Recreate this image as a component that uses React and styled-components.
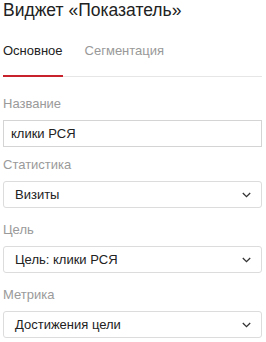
import React from 'react';
import styled, { createGlobalStyle } from 'styled-components';

const GlobalStyle = createGlobalStyle`
  html, body {
    margin: 0;
    padding: 0;
    background: #fff;
  }
  body {
    font-family: 'Liberation Sans', Arial, sans-serif;
    color: #222;
  }
`;

const fields = [
  { id: 'name', label: 'Название', value: 'клики РСЯ', kind: 'input', gap: 19 },
  { id: 'stat', label: 'Статистика', value: 'Визиты', kind: 'select', gap: 10 },
  { id: 'goal', label: 'Цель', value: 'Цель: клики РСЯ', kind: 'select', gap: 14 },
  { id: 'metric', label: 'Метрика', value: 'Достижения цели', kind: 'select', gap: 14 },
];

const Chevron = () => (
  <svg width="9" height="6" viewBox="0 0 9 6">
    <polyline points="0.8,1 4.5,4.6 8.2,1" fill="none" stroke="#333" strokeWidth="1.3" />
  </svg>
);

const Widget = () => {
  return (
    <Panel>
      <GlobalStyle />
      <Title>Виджет «Показатель»</Title>
      <Tabs>
        <Tab $active>Основное</Tab>
        <Tab>Сегментация</Tab>
      </Tabs>
      <Form>
        {fields.map(field => (
          <Field key={field.id} $gap={field.gap}>
            <Label>{field.label}</Label>
            {field.kind === 'input' ? (
              <Input>{field.value}</Input>
            ) : (
              <Select>
                <span>{field.value}</span>
                <Chevron />
              </Select>
            )}
          </Field>
        ))}
      </Form>
    </Panel>
  );
};

const Panel = styled.div`
  width: 266px;
  padding: 0 4px 0 3px;
  box-sizing: border-box;
`;

const Title = styled.div`
  font-size: 17.5px;
  line-height: 20px;
  color: #222;
`;

const Tabs = styled.div`
  display: flex;
  gap: 22px;
  margin-top: 23px;
  border-bottom: 1px solid #e6e6e6;
`;

const Tab = styled.div`
  font-size: 13px;
  line-height: 16px;
  padding-bottom: 16px;
  margin-bottom: -1px;
  color: ${p => (p.$active ? '#222' : '#999')};
  border-bottom: 2px solid ${p => (p.$active ? '#c8232c' : 'transparent')};
`;

const Form = styled.div`
  display: flex;
  flex-direction: column;
`;

const Field = styled.div`
  display: flex;
  flex-direction: column;
  margin-top: ${p => p.$gap}px;
`;

const Label = styled.div`
  font-size: 13px;
  line-height: 16px;
  color: #9a9a9a;
`;

const Input = styled.div`
  margin-top: 8px;
  height: 27px;
  box-sizing: border-box;
  border: 1px solid #d4d4d4;
  padding: 0 7px;
  display: flex;
  align-items: center;
  font-size: 13px;
  color: #222;
`;

const Select = styled.div`
  margin-top: 8px;
  height: 27px;
  box-sizing: border-box;
  border: 1px solid #dcdcdc;
  border-radius: 3px;
  padding: 0 10px 0 11px;
  display: flex;
  align-items: center;
  justify-content: space-between;
  font-size: 13px;
  color: #222;
`;

export default Widget;
